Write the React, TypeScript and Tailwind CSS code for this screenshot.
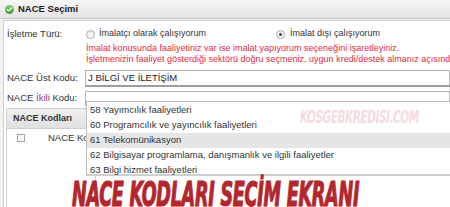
import { Check } from "lucide-react";

const items = [
  { code: "58", name: "Yayımcılık faaliyetleri" },
  { code: "60", name: "Programcılık ve yayıncılık faaliyetleri" },
  { code: "61", name: "Telekomünikasyon", active: true },
  { code: "62", name: "Bilgisayar programlama, danışmanlık ve ilgili faaliyetler" },
  { code: "63", name: "Bilgi hizmet faaliyetleri" },
];

function Radio({ checked }: { checked?: boolean }) {
  return (
    <span className="w-[9px] h-[9px] rounded-full border border-[#a9a9a9] bg-gradient-to-b from-[#e9e9e9] to-[#fdfdfd] flex items-center justify-center shrink-0">
      {checked && <span className="w-[3px] h-[3px] rounded-full bg-[#444]" />}
    </span>
  );
}

export default function App() {
  return (
    <div className="relative w-[450px] h-[207px] overflow-hidden bg-[#f2f2f2] text-[9px] text-[#333] font-['Liberation_Sans',Arial,sans-serif]">
      <div className="h-[19px] flex items-center gap-[4px] pl-[5px] bg-gradient-to-b from-[#f7f7f7] to-[#e4e4e4] border-b border-[#c4c4c4]">
        <span className="w-[9px] h-[9px] rounded-full bg-gradient-to-b from-[#7ed07a] to-[#3f9f3a] flex items-center justify-center">
          <Check size={7} strokeWidth={4} color="#fff" />
        </span>
        <span className="font-bold text-[9.5px] text-[#222]">NACE Seçimi</span>
      </div>

      <div className="ml-[3px] mt-[1px] h-full bg-white border-l border-t border-[#cfcfcf] pl-[3px]">
        <div className="flex items-center h-[14px] mt-[6px]">
          <span className="w-[79px] text-[9.5px]">İşletme Türü:</span>
          <Radio />
          <span className="ml-[4px] w-[177px] text-[9px]">İmalatçı olarak çalışıyorum</span>
          <Radio checked />
          <span className="ml-[5px] text-[9px]">İmalat dışı çalışıyorum</span>
        </div>
        <div className="ml-[79px] text-[#de2a3f] text-[9px] leading-[11px] whitespace-nowrap mt-[2px]">
          <div>İmalat konusunda faaliyetiniz var ise imalat yapıyorum seçeneğini işaretleyiniz.</div>
          <div>İşletmenizin faaliyet gösterdiği sektörü doğru seçmeniz, uygun kredi/destek almanız açısından önemlidir.</div>
        </div>

        <div className="flex items-center mt-[5px] h-[17px]">
          <span className="w-[78px] text-[9.5px]">NACE Üst Kodu:</span>
          <div className="flex-1 h-[17px] border border-[#b5b5b5] border-b-2 border-b-[#9c9c9c] flex items-center pl-[2px] text-[9.5px] text-[#222]">
            J BİLGİ VE İLETİŞİM
          </div>
        </div>
        <div className="flex items-center mt-[4px] h-[15px]">
          <span className="w-[78px] text-[9.5px]">
            NACE <span className="text-[#8a3d8f]">İkili</span> Kodu:
          </span>
          <div className="flex-1 h-[15px] border border-[#b5b5b5] border-b-2 border-b-[#9c9c9c]" />
        </div>

        <div className="mt-[2px] ml-[-1px] w-[90px] border border-[#d0d0d0] h-[120px]">
          <div className="h-[20px] bg-gradient-to-b from-[#f0f0f0] to-[#e0e0e0] border-b border-[#cfcfcf] flex items-center pl-[6px] font-bold text-[9px] text-[#333]">
            NACE Kodları
          </div>
          <div className="flex items-center h-[18px]">
            <span className="w-[28px] flex justify-center">
              <span className="w-[8px] h-[8px] border border-[#a5a5a5] bg-[#f6f6f6]" />
            </span>
            <span className="ml-[13px] text-[9.5px]">NACE Kod</span>
          </div>
        </div>
      </div>

      <div className="absolute left-[86px] top-[101px] w-[370px] h-[75px] bg-white border border-[#bdbdbd] border-b-2 border-b-[#cfcfcf] pt-[1px]">
        {items.map((it) => (
          <div
            key={it.code}
            className={`h-[15px] flex items-center pl-[3px] text-[9.5px] text-[#333] ${it.active ? "bg-[#e6e6e6]" : ""}`}
          >
            {it.code} {it.name}
          </div>
        ))}
      </div>

      <div className="absolute left-[300px] top-[109px] text-[13px] font-bold italic tracking-[-0.5px] leading-none text-[#f5d3d8] opacity-80 font-['Liberation_Sans_Narrow','DejaVu_Sans_Condensed',sans-serif] origin-top-left scale-x-[0.9] scale-y-[1.3] whitespace-nowrap">
        KOSGEBKREDISI.COM
      </div>

      <div className="absolute left-[72px] top-[178px] text-[23px] font-bold italic leading-none text-[#b3262c] [-webkit-text-stroke:0.8px_#b3262c] font-['Liberation_Sans_Narrow','DejaVu_Sans_Condensed',sans-serif] origin-top-left scale-x-[0.85] scale-y-[1.45] tracking-[-0.3px] whitespace-nowrap">
        NACE KODLARI SEÇİM EKRANI
      </div>
    </div>
  );
}
